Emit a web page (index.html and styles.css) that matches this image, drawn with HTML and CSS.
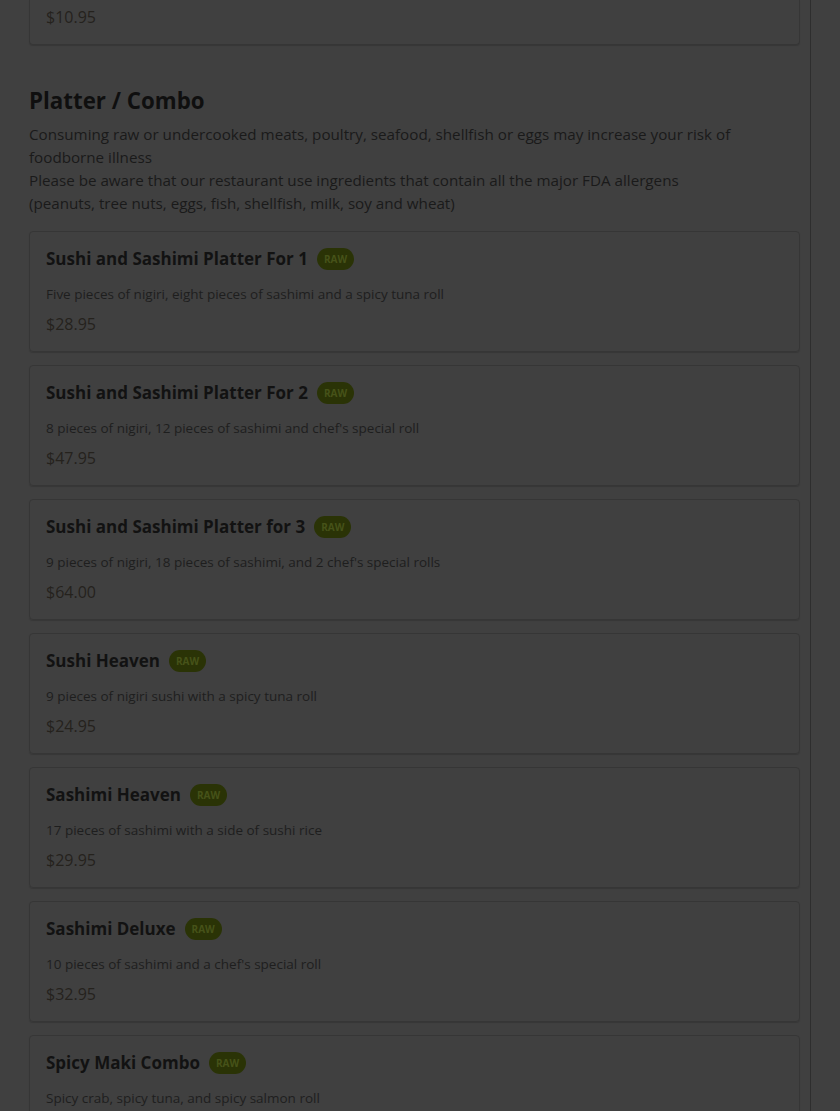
FILE: index.html
```html
<!DOCTYPE html>
<html>
<head>
<meta charset="utf-8">
<link rel="stylesheet" href="styles.css">
</head>
<body>
<div class="page">
  <div class="content">
    <div class="card partial">
      <div class="price">$10.95</div>
    </div>

    <h2 class="section-title">Platter / Combo</h2>
    <p class="section-note">Consuming raw or undercooked meats, poultry, seafood, shellfish or eggs may increase your risk of foodborne illness<br>Please be aware that our restaurant use ingredients that contain all the major FDA allergens<br>(peanuts, tree nuts, eggs, fish, shellfish, milk, soy and wheat)</p>

    <div class="card">
      <div class="title-row"><span class="title">Sushi and Sashimi Platter For 1</span><span class="badge">RAW</span></div>
      <div class="desc">Five pieces of nigiri, eight pieces of sashimi and a spicy tuna roll</div>
      <div class="price">$28.95</div>
    </div>
    <div class="card">
      <div class="title-row"><span class="title">Sushi and Sashimi Platter For 2</span><span class="badge">RAW</span></div>
      <div class="desc">8 pieces of nigiri, 12 pieces of sashimi and chef's special roll</div>
      <div class="price">$47.95</div>
    </div>
    <div class="card">
      <div class="title-row"><span class="title">Sushi and Sashimi Platter for 3</span><span class="badge">RAW</span></div>
      <div class="desc">9 pieces of nigiri, 18 pieces of sashimi, and 2 chef's special rolls</div>
      <div class="price">$64.00</div>
    </div>
    <div class="card">
      <div class="title-row"><span class="title">Sushi Heaven</span><span class="badge">RAW</span></div>
      <div class="desc">9 pieces of nigiri sushi with a spicy tuna roll</div>
      <div class="price">$24.95</div>
    </div>
    <div class="card">
      <div class="title-row"><span class="title">Sashimi Heaven</span><span class="badge">RAW</span></div>
      <div class="desc">17 pieces of sashimi with a side of sushi rice</div>
      <div class="price">$29.95</div>
    </div>
    <div class="card">
      <div class="title-row"><span class="title">Sashimi Deluxe</span><span class="badge">RAW</span></div>
      <div class="desc">10 pieces of sashimi and a chef's special roll</div>
      <div class="price">$32.95</div>
    </div>
    <div class="card">
      <div class="title-row"><span class="title">Spicy Maki Combo</span><span class="badge">RAW</span></div>
      <div class="desc">Spicy crab, spicy tuna, and spicy salmon roll</div>
    </div>
  </div>
</div>
</body>
</html>
```

FILE: styles.css
```css
html, body {
  margin: 0;
  padding: 0;
  background: #404040;
  overflow: hidden;
}
body {
  font-family: "Open Sans", "Noto Sans", sans-serif;
  color: #141414;
}
.page {
  width: 811px;
  border-right: 1px solid #2e2e2e;
  min-height: 1111px;
  box-sizing: border-box;
}
.content {
  padding-left: 29px;
  width: 771px;
}
.card {
  border: 1px solid #363636;
  border-radius: 4px;
  padding: 15px 16px 16px;
  margin-bottom: 13px;
  box-shadow: 0 1px 1px rgba(0,0,0,0.15);
}
.card.partial {
  border-top: none;
  border-radius: 0 0 4px 4px;
  padding-top: 6px;
  padding-bottom: 16px;
  margin-bottom: 0;
}
.title-row {
  display: flex;
  align-items: center;
  height: 24px;
}
.title {
  font-size: 17px;
  font-weight: 700;
  color: #121212;
  line-height: 24px;
}
.badge {
  margin-left: 9px;
  background: #2a3306;
  color: #465219;
  font-size: 10px;
  font-weight: 700;
  line-height: 22px;
  height: 22px;
  padding: 0 7px;
  border-radius: 11px;
}
.desc {
  margin-top: 14px;
  font-size: 13.5px;
  line-height: 18px;
  color: #1e1e1e;
}
.price {
  margin-top: 10px;
  font-size: 16px;
  line-height: 22px;
  color: #25221d;
}
.card.partial .price {
  margin-top: 0;
}
.section-title {
  margin: 41px 0 7px;
  font-size: 22.3px;
  line-height: 30px;
  font-weight: 700;
  color: #0f0f0f;
}
.section-note {
  margin: 0 0 16px;
  font-size: 15.2px;
  line-height: 23px;
  color: #1a1a1a;
}
```
